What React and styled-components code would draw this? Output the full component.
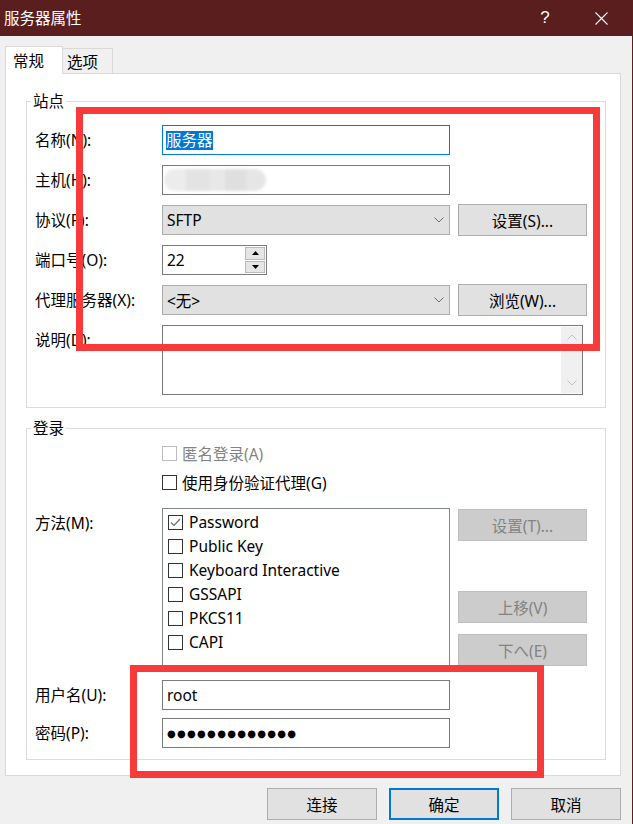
import React from "react";
import styled, { createGlobalStyle } from "styled-components";

const GlobalStyle = createGlobalStyle`
  html, body { margin: 0; padding: 0; background: #f0f0f0; }
  body {
    font-family: "Noto Sans", "Noto Sans CJK SC", sans-serif;
    font-size: 15.5px;
    color: #000;
  }
`;

const Window = styled.div`
  position: relative;
  width: 633px;
  height: 824px;
  box-sizing: border-box;
  border-right: 1px solid #5a1e1e;
  background: #f0f0f0;
  display: flex;
  flex-direction: column;
  overflow: hidden;
`;

const TitleBar = styled.div`
  height: 36px;
  flex: none;
  background: #5a1e1e;
  color: #fff;
  display: flex;
  align-items: center;
  padding-left: 4px;
`;

const Title = styled.div`
  flex: 1;
  line-height: 20px;
`;

const CaptionButton = styled.div`
  width: 46px;
  height: 36px;
  margin-right: ${(p) => p.$mr || 0}px;
  display: flex;
  align-items: center;
  justify-content: center;
  font-size: 17px;
  font-family: "Liberation Sans", sans-serif;
`;

const Body = styled.div`
  flex: 1;
  display: flex;
  flex-direction: column;
  padding: 10px 11px 0 5px;
`;

const TabStrip = styled.div`
  display: flex;
  align-items: flex-end;
  height: 28px;
  margin-bottom: -1px;
  position: relative;
  z-index: 1;
`;

const Tab = styled.div`
  box-sizing: border-box;
  height: ${(p) => (p.$active ? 28 : 26)}px;
  width: ${(p) => p.$w}px;
  padding: ${(p) => (p.$active ? "0 0 0 7px" : "1px 0 0 4px")};
  background: ${(p) => (p.$active ? "#fff" : "#f0f0f0")};
  border: 1px solid #d9d9d9;
  border-left: ${(p) => (p.$active ? "1px solid #d9d9d9" : "none")};
  border-bottom: ${(p) => (p.$active ? "none" : "1px solid #d9d9d9")};
  display: flex;
  align-items: center;
`;

const Panel = styled.div`
  box-sizing: border-box;
  height: 703px;
  background: #fff;
  border: 1px solid #d9d9d9;
  padding: 27px 14px 0 20px;
  display: flex;
  flex-direction: column;
  gap: 20px;
`;

const Group = styled.div`
  border: 1px solid #dcdcdc;
  display: flex;
  flex-direction: column;
  padding: 0 0 ${(p) => p.$pb}px 8px;
`;

const Legend = styled.div`
  align-self: flex-start;
  margin: -11px 0 0 -4px;
  padding: 0 2px;
  height: 20px;
  line-height: 20px;
  background: #fff;
`;

const Row = styled.div`
  display: flex;
  align-items: ${(p) => (p.$top ? "flex-start" : "center")};
  height: ${(p) => p.$h || 30}px;
  flex: none;
  margin-top: ${(p) => p.$mt || 0}px;
`;

const Label = styled.div`
  width: 127px;
  flex: none;
  line-height: 30px;
  white-space: nowrap;
`;

const TextBox = styled.div`
  box-sizing: border-box;
  width: ${(p) => p.$w || 288}px;
  height: 30px;
  flex: none;
  border: 1px solid ${(p) => (p.$focus ? "#0078d7" : "#7a7a7a")};
  background: #fff;
  display: flex;
  align-items: center;
  padding-left: ${(p) => p.$pl ?? 4}px;
`;

const Selected = styled.span`
  background: #0078d7;
  color: #fff;
  line-height: 19px;
`;

const Blurred = styled.div`
  width: 102px;
  height: 22px;
  border-radius: 11px;
  background: linear-gradient(
    90deg,
    #ececec 0 22%,
    #e3e3e3 22% 45%,
    #e8e8e8 45% 60%,
    #dfdfdf 60% 80%,
    #e6e6e6 80% 100%
  );
  filter: blur(1.5px);
`;

const Combo = styled.div`
  box-sizing: border-box;
  width: 288px;
  height: 30px;
  flex: none;
  border: 1px solid #adadad;
  background: #e1e1e1;
  display: flex;
  align-items: center;
  justify-content: space-between;
  padding: 0 5px 0 4px;
`;

const Button = styled.div`
  box-sizing: border-box;
  width: ${(p) => p.$w || 129}px;
  height: 32px;
  flex: none;
  margin-left: ${(p) => p.$ml || 0}px;
  margin-top: ${(p) => p.$mt || 0}px;
  border: ${(p) => (p.$default ? "2px solid #0078d7" : p.$disabled ? "1px solid #bfbfbf" : "1px solid #adadad")};
  background: ${(p) => (p.$disabled ? "#cccccc" : "#e1e1e1")};
  color: ${(p) => (p.$disabled ? "#838383" : "#000")};
  display: flex;
  align-items: center;
  justify-content: center;
`;

const Spin = styled.div`
  box-sizing: border-box;
  width: 105px;
  height: 30px;
  flex: none;
  border: 1px solid #7a7a7a;
  background: #fff;
  display: flex;
  align-items: stretch;
`;

const SpinText = styled.div`
  flex: 1;
  display: flex;
  align-items: center;
  padding-left: 4px;
`;

const SpinButtons = styled.div`
  width: 20px;
  display: flex;
  flex-direction: column;
  padding: 1px 1px 1px 0;
  gap: 1px;
`;

const SpinButton = styled.div`
  flex: 1;
  box-sizing: border-box;
  background: #e6e6e6;
  border: 1px solid #b9b9b9;
  display: flex;
  align-items: center;
  justify-content: center;
`;

const TextArea = styled.div`
  box-sizing: border-box;
  width: 421px;
  height: 70px;
  flex: none;
  border: 1px solid #7a7a7a;
  background: #fff;
  display: flex;
  justify-content: flex-end;
  padding: 1px 0;
`;

const ScrollBar = styled.div`
  width: 21px;
  background: #f0f0f0;
  display: flex;
  flex-direction: column;
  justify-content: space-between;
  align-items: center;
  padding: 7px 0;
`;

const CheckRow = styled.div`
  display: flex;
  align-items: center;
  height: 24px;
  gap: ${(p) => p.$gap || 5}px;
  color: ${(p) => (p.$disabled ? "#838383" : "#000")};
  white-space: nowrap;
`;

const Box = styled.span`
  box-sizing: border-box;
  width: 15px;
  height: 15px;
  flex: none;
  border: 1px solid ${(p) => (p.$disabled ? "#bcbcbc" : "#333")};
  background: #fff;
  display: flex;
  align-items: center;
  justify-content: center;
`;

const ListBox = styled.div`
  box-sizing: border-box;
  width: 288px;
  height: 160px;
  flex: none;
  border: 1px solid #828790;
  background: #fff;
  padding: 1px 0 0 5px;
`;

const SideButtons = styled.div`
  display: flex;
  flex-direction: column;
  margin-left: 8px;
`;

const Dots = styled.span`
  font-family: "DejaVu Sans", sans-serif;
  font-size: 10px;
  letter-spacing: 1.3px;
`;

const Footer = styled.div`
  display: flex;
  justify-content: flex-end;
  gap: 12px;
  margin-top: 12px;
`;

const Highlight = styled.div`
  position: absolute;
  box-sizing: border-box;
  border: 7px solid #f93a3a;
  pointer-events: none;
`;

const Chevron = ({ up, color = "#6d6d6d" }) => (
  <svg width="10" height="6" viewBox="0 0 10 6">
    <path
      d={up ? "M0.5 5.5 L5 1 L9.5 5.5" : "M0.5 0.5 L5 5 L9.5 0.5"}
      fill="none"
      stroke={color}
      strokeWidth="1"
    />
  </svg>
);

const Triangle = ({ up }) => (
  <svg width="7" height="4" viewBox="0 0 7 4">
    <path d={up ? "M0 4 L3.5 0 L7 4 Z" : "M0 0 L3.5 4 L7 0 Z"} fill="#000" />
  </svg>
);

const Check = ({ checked, disabled }) => (
  <Box $disabled={disabled}>
    {checked && (
      <svg width="11" height="9" viewBox="0 0 11 9">
        <path d="M1 4.5 L4 7.5 L10 1" fill="none" stroke="#6d6d6d" strokeWidth="1.2" />
      </svg>
    )}
  </Box>
);

const methods = [
  { name: "Password", checked: true },
  { name: "Public Key" },
  { name: "Keyboard Interactive" },
  { name: "GSSAPI" },
  { name: "PKCS11" },
  { name: "CAPI" },
];

export default function App() {
  return (
    <Window>
      <GlobalStyle />
      <TitleBar>
        <Title>服务器属性</Title>
        <CaptionButton $mr={10}>?</CaptionButton>
        <CaptionButton $mr={8}>
          <svg width="13" height="13" viewBox="0 0 13 13">
            <path d="M0.5 0.5 L12.5 12.5 M12.5 0.5 L0.5 12.5" stroke="#fff" strokeWidth="1.1" />
          </svg>
        </CaptionButton>
      </TitleBar>

      <Body>
        <TabStrip>
          <Tab $active $w={58}>常规</Tab>
          <Tab $w={50}>选项</Tab>
        </TabStrip>

        <Panel>
          <Group $pb={12}>
            <Legend>站点</Legend>
            <Row $mt={14}>
              <Label>名称(N):</Label>
              <TextBox $focus $pl={3}>
                <Selected>服务器</Selected>
              </TextBox>
            </Row>
            <Row $mt={10}>
              <Label>主机(H):</Label>
              <TextBox $pl={1}>
                <Blurred />
              </TextBox>
            </Row>
            <Row $mt={10}>
              <Label>协议(P):</Label>
              <Combo>
                <span>SFTP</span>
                <Chevron />
              </Combo>
              <Button $ml={8}>设置(S)...</Button>
            </Row>
            <Row $mt={10}>
              <Label>端口号(O):</Label>
              <Spin>
                <SpinText>22</SpinText>
                <SpinButtons>
                  <SpinButton>
                    <Triangle up />
                  </SpinButton>
                  <SpinButton>
                    <Triangle />
                  </SpinButton>
                </SpinButtons>
              </Spin>
            </Row>
            <Row $mt={10}>
              <Label>代理服务器(X):</Label>
              <Combo>
                <span>&lt;无&gt;</span>
                <Chevron />
              </Combo>
              <Button $ml={8}>浏览(W)...</Button>
            </Row>
            <Row $mt={10} $h={70} $top>
              <Label>说明(D):</Label>
              <TextArea>
                <ScrollBar>
                  <Chevron up color="#c2c2c2" />
                  <Chevron color="#c2c2c2" />
                </ScrollBar>
              </TextArea>
            </Row>
          </Group>

          <Group $pb={11}>
            <Legend>登录</Legend>
            <Row $h={24} $mt={3}>
              <Label />
              <CheckRow $disabled>
                <Check disabled />
                匿名登录(A)
              </CheckRow>
            </Row>
            <Row $h={24} $mt={5}>
              <Label />
              <CheckRow>
                <Check />
                使用身份验证代理(G)
              </CheckRow>
            </Row>
            <Row $mt={14} $h={160} $top>
              <Label>方法(M):</Label>
              <ListBox>
                {methods.map((m) => (
                  <CheckRow key={m.name} $gap={6}>
                    <Check checked={m.checked} />
                    {m.name}
                  </CheckRow>
                ))}
              </ListBox>
              <SideButtons>
                <Button $disabled $mt={1}>设置(T)...</Button>
                <Button $disabled $mt={50}>上移(V)</Button>
                <Button $disabled $mt={11}>下へ(E)</Button>
              </SideButtons>
            </Row>
            <Row $mt={12}>
              <Label>用户名(U):</Label>
              <TextBox>root</TextBox>
            </Row>
            <Row $mt={8}>
              <Label>密码(P):</Label>
              <TextBox>
                <Dots>●●●●●●●●●●●●●</Dots>
              </TextBox>
            </Row>
          </Group>
        </Panel>

        <Footer>
          <Button $w={110}>连接</Button>
          <Button $w={110} $default>确定</Button>
          <Button $w={110}>取消</Button>
        </Footer>
      </Body>

      <Highlight style={{ left: 76, top: 107, width: 524, height: 244 }} />
      <Highlight style={{ left: 130, top: 665, width: 414, height: 113 }} />
    </Window>
  );
}
